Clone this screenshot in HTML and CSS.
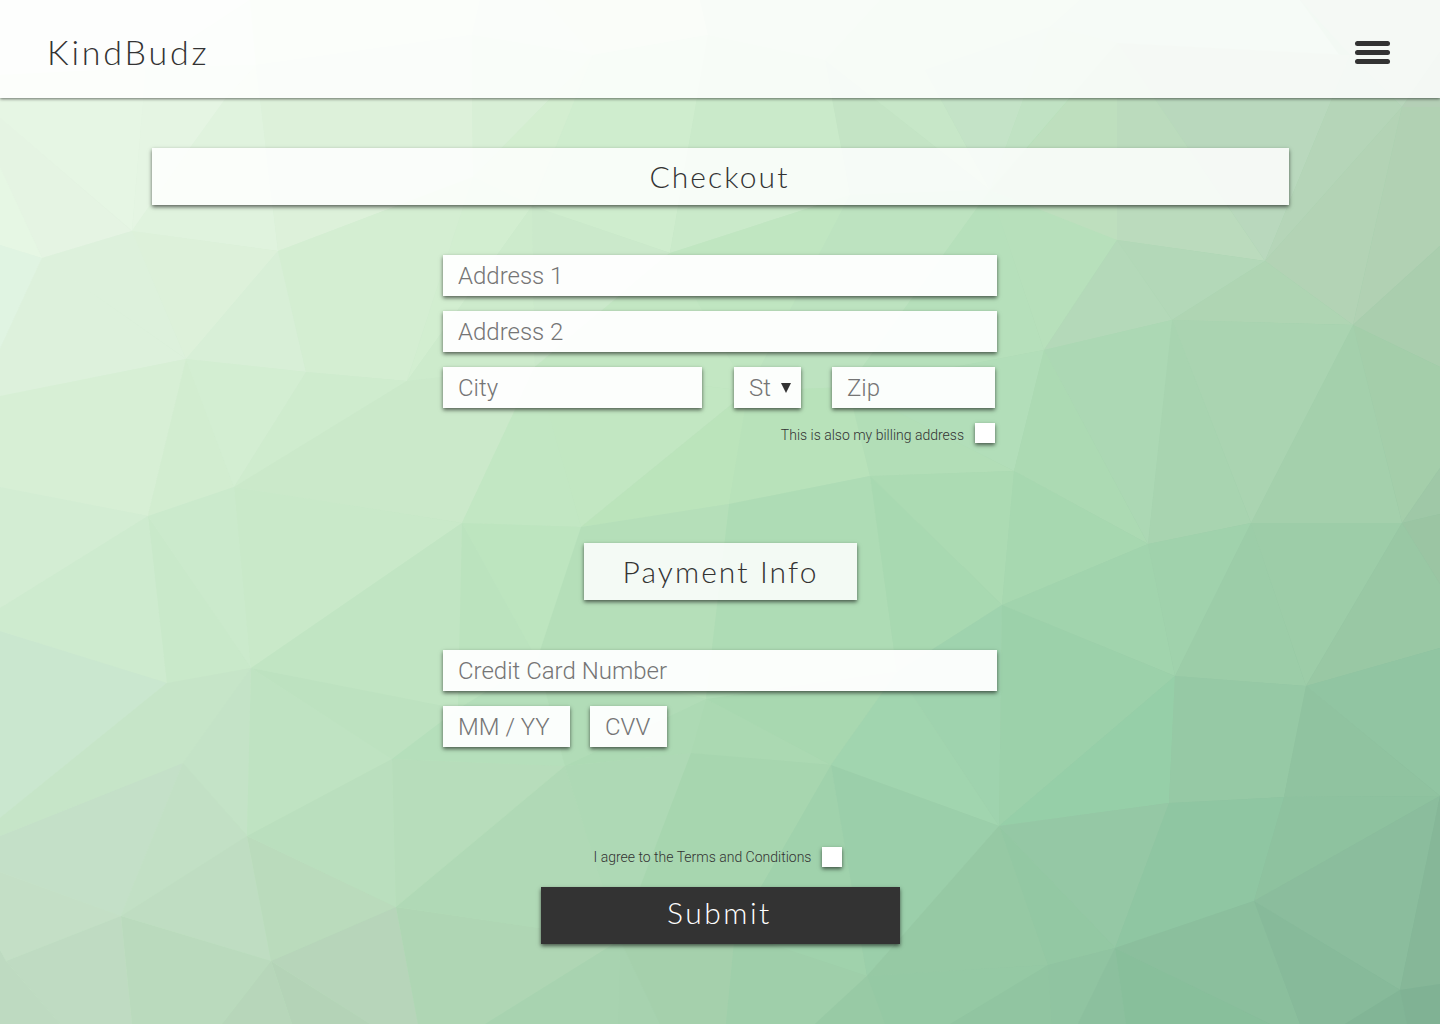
FILE: index.html
```html
<!DOCTYPE html>
<html lang="en">
<head>
<meta charset="utf-8">
<title>KindBudz - Checkout</title>
<link rel="stylesheet" href="styles.css">
</head>
<body>
<svg class="backdrop" viewBox="0 0 1440 1024" preserveAspectRatio="none" aria-hidden="true">
  <defs>
    <linearGradient id="base" gradientUnits="userSpaceOnUse" x1="100" y1="0" x2="1340" y2="1024">
      <stop offset="0" stop-color="#e7f6e5"/><stop offset=".5" stop-color="#b8e1bb"/><stop offset="1" stop-color="#82b798"/>
    </linearGradient>
  </defs>
  <rect width="1440" height="1024" fill="url(#base)"/>
  <!-- top strip -->
  <polygon fill="#f1f7ed" points="0,0 250,0 146,68 0,75"/>
  <polygon fill="#e6f6e4" points="0,75 146,68 132,231 0,118"/>
  <polygon fill="#e9f6e6" points="250,0 256,65 146,68"/>
  <polygon fill="#e5f5e3" points="146,68 256,65 226,98 190,148 132,231"/>
  <polygon fill="#e0f3de" points="256,65 278,251 132,231 190,148 226,98"/>
  <polygon fill="#e3f4df" points="250,0 480,0 472,35 256,65"/>
  <polygon fill="#ddf1da" points="256,65 472,35 473,177 278,251"/>
  <polygon fill="#def2dc" points="480,0 545,0 593,55 472,35"/>
  <polygon fill="#d8efd6" points="472,35 593,55 473,177"/>
  <polygon fill="#dcf0d8" points="545,0 700,0 708,35 593,55"/>
  <polygon fill="#d3eed0" points="593,55 532,206 473,177"/>
  <polygon fill="#cfedce" points="593,55 708,35 670,253 532,206"/>
  <polygon fill="#d2ebd0" points="700,0 880,0 825,60 708,35"/>
  <polygon fill="#caeaca" points="708,35 825,60 850,195 670,253"/>
  <polygon fill="#cbe7ca" points="880,0 1080,0 1050,27 925,70 825,60"/>
  <polygon fill="#c4e4c5" points="825,60 990,190 850,195"/>
  <polygon fill="#c7e7c8" points="825,60 925,70 990,190"/>
  <polygon fill="#c4e3c7" points="925,70 1050,27 990,190"/>
  <polygon fill="#c4e1c5" points="1080,0 1300,0 1350,70 1117,43 1050,27"/>
  <polygon fill="#c0e2c3" points="1050,27 1117,43 990,190"/>
  <polygon fill="#bedfbe" points="1117,43 1117,240 977,207"/>
  <polygon fill="#bbdbbd" points="1117,43 1265,261 1117,240"/>
  <polygon fill="#b9d8bd" points="1117,43 1350,55 1265,261"/>
  <polygon fill="#b8d5bb" points="1300,0 1440,0 1440,52 1402,107 1350,55"/>
  <polygon fill="#b5d5b8" points="1350,55 1402,107 1265,261"/>
  <polygon fill="#b4cfb6" points="1440,52 1440,107 1402,107"/>
  <!-- left side -->
  <polygon fill="#e5f4e3" points="0,118 132,231 42,258 0,167"/>
  <polygon fill="#e6f7e4" points="0,167 42,258 0,245"/>
  <polygon fill="#e0f4e2" points="0,245 42,258 0,349"/>
  <polygon fill="#ddf1dc" points="42,258 132,231 186,359"/>
  <polygon fill="#ddf1dc" points="42,258 186,359 0,396 0,349"/>
  <polygon fill="#ddf1da" points="132,231 278,251 186,359"/>
  <polygon fill="#d8efd7" points="278,251 306,372 186,359"/>
  <polygon fill="#d4eed2" points="278,251 473,177 407,381 306,372"/>
  <polygon fill="#d2eed0" points="473,177 532,206 407,381"/>
  <polygon fill="#cdebcc" points="532,206 535,367 407,381"/>
  <polygon fill="#cbe9cb" points="532,206 670,253 535,367"/>
  <polygon fill="#d7efd5" points="186,359 148,516 0,487 0,396"/>
  <polygon fill="#d2edd0" points="186,359 234,487 148,516"/>
  <polygon fill="#d3eed2" points="186,359 306,372 234,487"/>
  <polygon fill="#cfecce" points="306,372 407,381 234,487"/>
  <polygon fill="#cbe9ca" points="407,381 535,367 462,523 234,487"/>
  <polygon fill="#d3edd3" points="0,487 148,516 0,608"/>
  <polygon fill="#ceebcf" points="148,516 167,683 0,631 0,608"/>
  <polygon fill="#c9e9ca" points="148,516 251,668 167,683"/>
  <polygon fill="#cbeacc" points="148,516 234,487 251,668"/>
  <polygon fill="#c9e9c9" points="234,487 462,523 251,668"/>
  <polygon fill="#c1e5c3" points="462,523 458,709 251,668"/>
  <polygon fill="#cae7cf" points="0,631 167,683 0,818"/>
  <polygon fill="#c6e5c8" points="167,683 251,668 183,763 0,836 0,818"/>
  <polygon fill="#c4e3c7" points="251,668 247,836 183,763"/>
  <polygon fill="#bfe3c2" points="251,668 392,759 247,836"/>
  <polygon fill="#bde2c0" points="251,668 458,709 392,759"/>
  <polygon fill="#c4e0c8" points="183,763 121,916 0,872 0,836"/>
  <polygon fill="#c2e0c5" points="183,763 247,836 121,916"/>
  <polygon fill="#c4dfc6" points="0,872 121,916 6,961 0,950"/>
  <polygon fill="#bfddc2" points="247,836 271,961 121,916"/>
  <polygon fill="#badbbc" points="247,836 396,907 271,961"/>
  <polygon fill="#badfbe" points="247,836 392,759 396,907"/>
  <polygon fill="#b7ddbb" points="392,759 565,766 396,907"/>
  <polygon fill="#bfdbc2" points="121,916 132,1024 60,1024 6,961"/>
  <polygon fill="#bedac1" points="0,950 6,961 60,1024 0,1024"/>
  <polygon fill="#badabd" points="121,916 271,961 222,1024 132,1024"/>
  <polygon fill="#b7d6ba" points="271,961 292,1024 222,1024"/>
  <polygon fill="#b4d3b7" points="271,961 370,1024 292,1024"/>
  <polygon fill="#b7d5ba" points="271,961 396,907 418,1024 370,1024"/>
  <polygon fill="#afd6b4" points="396,907 620,940 485,1024 418,1024"/>
  <polygon fill="#b0d9b6" points="565,766 620,940 396,907"/>
  <!-- centre -->
  <polygon fill="#c3e7c3" points="670,253 748,391 535,367"/>
  <polygon fill="#c2e7c2" points="535,367 748,391 581,527"/>
  <polygon fill="#c2e7c3" points="535,367 581,527 462,523"/>
  <polygon fill="#c0e6c1" points="670,253 850,195 748,391"/>
  <polygon fill="#bde3c0" points="850,195 990,190 848,387 748,391"/>
  <polygon fill="#b6e0bb" points="990,190 1044,350 848,387"/>
  <polygon fill="#b7e0bb" points="990,190 1117,240 1044,350"/>
  <polygon fill="#bbe4bb" points="748,391 729,504 581,527"/>
  <polygon fill="#b8e2ba" points="748,391 848,387 870,476 729,504"/>
  <polygon fill="#b2deb9" points="848,387 1044,350 1014,471"/>
  <polygon fill="#b2deb7" points="848,387 1014,471 870,476"/>
  <polygon fill="#bde5bf" points="462,523 581,527 537,660"/>
  <polygon fill="#bbe3be" points="462,523 537,660 458,709"/>
  <polygon fill="#b5dfb9" points="581,527 729,504 706,699 537,660"/>
  <polygon fill="#aedcb5" points="729,504 870,476 897,672 706,699"/>
  <polygon fill="#acdbb3" points="870,476 1014,471 1002,605"/>
  <polygon fill="#a8d9b1" points="870,476 1002,605 897,672"/>
  <polygon fill="#b5dfbb" points="458,709 537,660 565,766 392,759"/>
  <polygon fill="#b1dcb7" points="537,660 706,699 565,766"/>
  <polygon fill="#addab4" points="706,699 691,753 565,766"/>
  <polygon fill="#abd9b2" points="706,699 831,765 691,753"/>
  <polygon fill="#a8d8b0" points="706,699 897,672 831,765"/>
  <polygon fill="#aed9b5" points="565,766 691,753 620,940"/>
  <polygon fill="#a7d6af" points="691,753 831,765 735,932 620,940"/>
  <polygon fill="#a0d2ac" points="831,765 867,976 735,932"/>
  <polygon fill="#9fd3ae" points="897,672 1002,605 999,826"/>
  <polygon fill="#a1d5af" points="897,672 999,826 831,765"/>
  <polygon fill="#9bcfaa" points="831,765 999,826 867,976"/>
  <polygon fill="#a7d2af" points="620,940 660,1024 618,1024"/>
  <polygon fill="#a8d3b0" points="620,940 618,1024 485,1024"/>
  <polygon fill="#a5d0ac" points="620,940 735,932 726,1024 660,1024"/>
  <polygon fill="#9fcfaa" points="735,932 867,976 815,1024 726,1024"/>
  <polygon fill="#98caa5" points="867,976 885,1024 815,1024"/>
  <polygon fill="#96c9a4" points="999,826 1048,965 867,976"/>
  <polygon fill="#95c9a4" points="867,976 1048,965 960,1019 950,1024 885,1024"/>
  <!-- right side -->
  <polygon fill="#b4d9b9" points="1117,240 1172,320 1044,350"/>
  <polygon fill="#b3d8b8" points="1117,240 1265,261 1172,320"/>
  <polygon fill="#b3d3b5" points="1402,107 1353,325 1265,261"/>
  <polygon fill="#afd5b3" points="1265,261 1353,325 1172,320"/>
  <polygon fill="#b1d1b3" points="1402,107 1440,107 1440,246 1353,325"/>
  <polygon fill="#aaceae" points="1353,325 1440,246 1440,367"/>
  <polygon fill="#a4ceaa" points="1353,325 1440,367 1440,468 1402,523"/>
  <polygon fill="#a4d0ac" points="1353,325 1402,523 1251,523"/>
  <polygon fill="#aad4b1" points="1172,320 1353,325 1251,523"/>
  <polygon fill="#a8d4b0" points="1172,320 1251,523 1148,544"/>
  <polygon fill="#acd8b4" points="1044,350 1172,320 1148,544"/>
  <polygon fill="#acdab3" points="1044,350 1148,544 1014,471"/>
  <polygon fill="#a7d8b0" points="1014,471 1148,544 1002,605"/>
  <polygon fill="#a1d4ad" points="1148,544 1175,676 1002,605"/>
  <polygon fill="#a0d2ac" points="1148,544 1251,523 1175,676"/>
  <polygon fill="#9ccda8" points="1251,523 1306,686 1175,676"/>
  <polygon fill="#9dcda8" points="1251,523 1402,523 1306,686"/>
  <polygon fill="#9fc8a7" points="1440,468 1440,514 1402,523"/>
  <polygon fill="#9bc5a3" points="1402,523 1440,514 1440,584"/>
  <polygon fill="#99c8a4" points="1402,523 1440,584 1440,648 1306,686"/>
  <polygon fill="#9cd1aa" points="1002,605 1175,676 999,826"/>
  <polygon fill="#96cfa8" points="1175,676 1169,803 999,826"/>
  <polygon fill="#96c9a5" points="1175,676 1306,686 1284,797 1169,803"/>
  <polygon fill="#91c5a2" points="1306,686 1440,648 1440,796"/>
  <polygon fill="#90c3a0" points="1306,686 1440,796 1284,797"/>
  <polygon fill="#95c8a5" points="999,826 1169,803 1115,948"/>
  <polygon fill="#93c8a3" points="999,826 1115,948 1048,965"/>
  <polygon fill="#8fc6a2" points="1169,803 1284,797 1254,901 1115,948"/>
  <polygon fill="#8ec29f" points="1284,797 1440,796 1254,901"/>
  <polygon fill="#8bbd9d" points="1440,796 1400,990 1254,901"/>
  <polygon fill="#86b798" points="1440,796 1440,984 1400,990"/>
  <polygon fill="#91c5a1" points="1048,965 1052,1024 950,1024"/>
  <polygon fill="#90c4a1" points="1048,965 1115,948 1078,1024 1052,1024"/>
  <polygon fill="#8cc09e" points="1115,948 1126,1024 1078,1024"/>
  <polygon fill="#88bf9b" points="1115,948 1270,1024 1126,1024"/>
  <polygon fill="#8bbf9d" points="1115,948 1254,901 1300,1024 1270,1024"/>
  <polygon fill="#87ba9a" points="1254,901 1400,990 1345,1024 1300,1024"/>
  <polygon fill="#82b596" points="1400,990 1407,1024 1345,1024"/>
  <polygon fill="#80b294" points="1400,990 1440,984 1440,1024 1407,1024"/>
</svg>

<header class="topbar">
  <a class="brand">KindBudz</a>
  <button class="menu" aria-label="Menu"><i></i><i></i><i></i></button>
</header>

<main class="page">
  <h1 class="banner banner-wide">Checkout</h1>

  <form class="form">
    <section class="fields">
      <input class="field" type="text" placeholder="Address 1">
      <input class="field" type="text" placeholder="Address 2">
      <div class="row">
        <input class="field city" type="text" placeholder="City">
        <div class="field state"><span>St</span><svg class="caret" width="10" height="10" viewBox="0 0 10 10"><path d="M0 0h10L5 10z" fill="#333"/></svg></div>
        <input class="field zip" type="text" placeholder="Zip">
      </div>
      <label class="check billing"><span>This is also my billing address</span><i class="box"></i></label>
    </section>

    <h2 class="banner banner-small">Payment Info</h2>

    <section class="fields">
      <input class="field" type="text" placeholder="Credit Card Number">
      <div class="row">
        <input class="field expiry" type="text" placeholder="MM / YY">
        <input class="field cvv" type="text" placeholder="CVV">
      </div>
    </section>

    <label class="check terms"><span>I agree to the Terms and Conditions</span><i class="box"></i></label>
    <button class="submit" type="button">Submit</button>
  </form>
</main>
</body>
</html>
```

FILE: styles.css
```css
* { box-sizing: border-box; }

body {
  margin: 0;
  height: 1024px;
  overflow: hidden;
  color: #333;
  font-family: Roboto, "Open Sans", sans-serif;
  font-weight: 300;
}

.backdrop {
  position: absolute;
  inset: 0;
  z-index: -1;
  width: 1440px;
  height: 1024px;
}

.topbar {
  display: flex;
  justify-content: space-between;
  height: 98px;
  padding: 0 50px 0 47px;
  background: rgba(255, 255, 255, .85);
  box-shadow: 0 1px 3px rgba(0, 0, 0, .55);
}

.brand {
  padding-top: 31px;
  font: 300 34px/42px Lato, sans-serif;
  letter-spacing: 2.8px;
}

.menu {
  display: flex;
  flex-direction: column;
  gap: 4px;
  width: 35px;
  margin: 41px 0 0;
  padding: 0;
  border: 0;
  background: none;
}

.menu i {
  width: 35px;
  height: 5px;
  border-radius: 2.5px;
  background: #333;
}

.page {
  display: flex;
  flex-direction: column;
  align-items: center;
  padding-top: 50px;
}

.banner {
  display: flex;
  justify-content: center;
  height: 57px;
  margin: 0;
  padding-top: 9px;
  background: rgba(255, 255, 255, .85);
  box-shadow: 0 2px 4px rgba(0, 0, 0, .6);
  font: 300 30px/38px Lato, sans-serif;
  letter-spacing: 2.1px;
}

.banner-wide { width: 1137px; margin-left: 1px; padding-right: 2px; }
.banner-small { width: 273px; margin: 100px 0 50px 1px; }

.form {
  display: flex;
  flex-direction: column;
  align-items: center;
  width: 554px;
  margin-top: 50px;
}

.fields {
  display: flex;
  flex-direction: column;
  gap: 15px;
  width: 554px;
}

.row { display: flex; }

.field {
  width: 554px;
  height: 41px;
  padding: 1px 15px 0;
  border: 0;
  outline: 0;
  background: rgba(255, 255, 255, .95);
  box-shadow: 0 2px 4px rgba(0, 0, 0, .6);
  color: #757575;
  font: 300 24px/39px Roboto, "Open Sans", sans-serif;
}

.field::placeholder { color: #757575; opacity: 1; }

.city { width: 259px; }

.state {
  display: flex;
  align-items: center;
  justify-content: space-between;
  width: 67px;
  margin: 0 31px 0 32px;
  padding: 2px 10px 0 15px;
}

.caret { margin-bottom: 2px; }

.zip { width: 163px; }
.expiry { width: 127px; margin-right: 20px; }
.cvv { width: 77px; }

.check {
  display: flex;
  gap: 11px;
  height: 20px;
  font-size: 14px;
  line-height: 20px;
}

.box {
  width: 20px;
  height: 20px;
  background: #fff;
  box-shadow: 0 2px 4px rgba(0, 0, 0, .6);
}

.billing { align-self: flex-end; margin-right: 2px; }
.billing span { padding-top: 2px; }

.terms { margin: 100px 4px 20px 0; }

.submit {
  width: 359px;
  height: 57px;
  margin-left: 1px;
  padding: 0 2px 7px 0;
  border: 0;
  background: #333;
  box-shadow: 0 2px 4px rgba(0, 0, 0, .6);
  color: #fff;
  font: 300 30px/38px Lato, sans-serif;
  letter-spacing: 2.5px;
}
```
